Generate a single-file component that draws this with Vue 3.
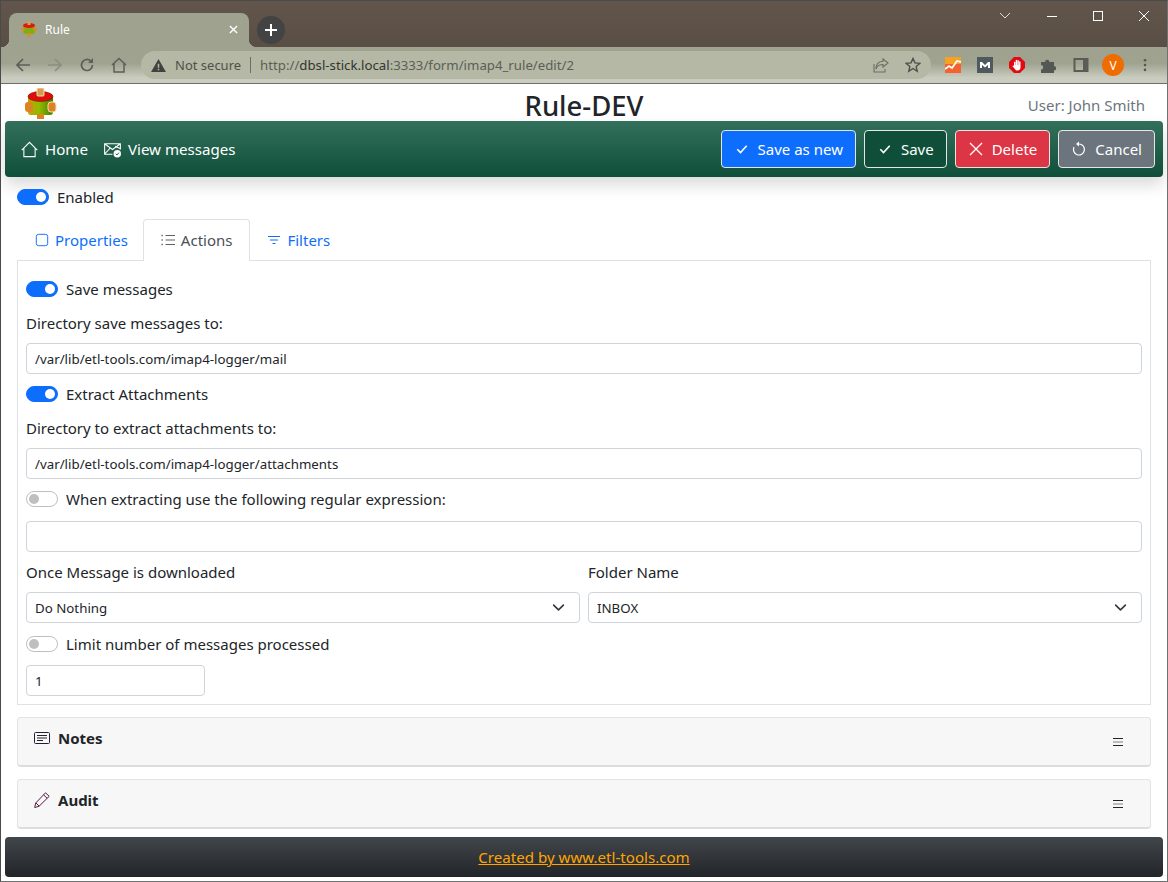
<script setup>
const navLinks = [
  { label: 'Home', icon: 'home' },
  { label: 'View messages', icon: 'mail' }
]
const buttons = [
  { label: 'Save as new', cls: 'primary', icon: 'check' },
  { label: 'Save', cls: 'dark', icon: 'check' },
  { label: 'Delete', cls: 'danger', icon: 'x' },
  { label: 'Cancel', cls: 'muted', icon: 'undo' }
]
const accordions = [
  { label: 'Notes', icon: 'notes' },
  { label: 'Audit', icon: 'pencil' }
]
</script>

<template>
  <div class="window">
    <div class="tabstrip">
      <div class="tab">
        <svg class="favicon" viewBox="0 0 16 16">
          <rect x="2.5" y="4" width="11" height="9" fill="#7fae10" />
          <rect x="0.5" y="6" width="3" height="4" rx="1" fill="#e08a20" />
          <rect x="12.5" y="6" width="3" height="4" rx="1" fill="#e08a20" />
          <rect x="6.5" y="12" width="3" height="4" fill="#e08a20" />
          <ellipse cx="8" cy="4.5" rx="6" ry="2.4" fill="#d81a10" />
          <rect x="6.5" y="0.5" width="3" height="3.5" fill="#d9a050" />
        </svg>
        <span class="tab-title">Rule</span>
        <svg class="tab-close" viewBox="0 0 10 10"><path d="M1 1l8 8M9 1l-8 8" stroke="#fff" stroke-width="1.5" /></svg>
      </div>
      <div class="new-tab">
        <svg viewBox="0 0 12 12" width="12" height="12"><path d="M6 0v12M0 6h12" stroke="#fff" stroke-width="2" /></svg>
      </div>
      <div class="win-controls">
        <svg viewBox="0 0 12 8" width="12" height="8"><path d="M1 1l5 5 5-5" fill="none" stroke="#ddd" stroke-width="1" /></svg>
        <svg viewBox="0 0 10 10" width="10" height="10"><path d="M0 5.5h10" stroke="#fff" stroke-width="1" /></svg>
        <svg viewBox="0 0 10 10" width="10" height="10"><rect x="0.5" y="0.5" width="9" height="9" fill="none" stroke="#fff" /></svg>
        <svg viewBox="0 0 10 10" width="10" height="10"><path d="M0 0l10 10M10 0L0 10" stroke="#fff" stroke-width="1" /></svg>
      </div>
    </div>

    <div class="toolbar">
      <svg class="tool" viewBox="0 0 16 16"><path d="M15 8H2M8 2L2 8l6 6" fill="none" stroke="#5c5f5a" stroke-width="1.7" /></svg>
      <svg class="tool" viewBox="0 0 16 16"><path d="M1 8h13M8 2l6 6-6 6" fill="none" stroke="#8a8e80" stroke-width="1.7" /></svg>
      <svg class="tool" viewBox="0 0 16 16"><path d="M13.5 8a5.5 5.5 0 1 1-1.6-3.9" fill="none" stroke="#5c5f5a" stroke-width="1.7" /><path d="M14 1v5H9z" fill="#5c5f5a" /></svg>
      <svg class="tool" viewBox="0 0 16 16"><path d="M1 8l7-6.5L15 8M3 6.5V15h10V6.5" fill="none" stroke="#5c5f5a" stroke-width="1.5" /></svg>
      <div class="omnibox">
        <svg class="warn" viewBox="0 0 16 14"><path d="M8 0l8 14H0z" fill="#3f423f" /><path d="M7.2 5h1.6v4.5H7.2zM7.2 10.5h1.6V12H7.2z" fill="#b4b8a5" /></svg>
        <span class="secure">Not secure</span>
        <span class="url-sep"></span>
        <span class="url"><span class="url-faint">http://</span>dbsl-stick.local<span class="url-faint">:3333/form/imap4_rule/edit/2</span></span>
        <svg class="omni-ico" viewBox="0 0 16 16"><path d="M10 2l5 4-5 4V7.5C6 7.5 4 9 3 12c0-4.500 2.500-7.500 7-7.800zM1 7v8h11v-3" fill="none" stroke="#6b6e63" stroke-width="1.100" /></svg>
        <svg class="omni-ico" viewBox="0 0 16 16"><path d="M8 1.500l2 4.400 4.800.5-3.600 3.200 1 4.700L8 11.500l-4.200 2.800 1-4.700L1.200 6.400 6 5.900z" fill="none" stroke="#4d504a" stroke-width="1.400" /></svg>
      </div>
      <div class="extensions">
        <svg class="ext" viewBox="0 0 16 16"><rect width="16" height="16" fill="#f5622d" /><path d="M0 0h16v7H0z" fill="#f8a022" /><path d="M0 12l4-3 3 2 5-7 4 1" fill="none" stroke="#fff" stroke-width="1.800" /></svg>
        <svg class="ext" viewBox="0 0 16 16"><rect width="16" height="16" fill="#4f5a5e" /><path d="M3 11V5h2l3 3 3-3h2v6h-2V8L8 10.500 5 8v3z" fill="#fff" /></svg>
        <svg class="ext" viewBox="0 0 16 16">
          <path d="M5 0h6l5 5v6l-5 5H5l-5-5V5z" fill="#e00b12" />
          <path d="M5 5.500a.7.7 0 0 1 1.400 0V8h.3V3.500a.7.7 0 0 1 1.400 0V8h.3V3.800a.7.7 0 0 1 1.400 0V8h.3V5a.7.7 0 0 1 1.400 0v5.500c0 1.800-1.200 3-3 3H8.500c-1.200 0-2-.6-2.600-1.600L3.700 9.500c-.5-.8.600-1.500 1.100-.8L5 9z" fill="#fff" />
        </svg>
        <svg class="ext" viewBox="0 0 16 16"><path d="M0 5h4a2.200 2.200 0 1 1 4.400 0H13v4a2.200 2.200 0 1 1 0 4.400V16H0v-3.500a2.200 2.200 0 1 0 0-4.400z" fill="#555852" /></svg>
        <svg class="ext" viewBox="0 0 16 16"><rect x="1.500" y="2" width="13" height="12" fill="none" stroke="#5a5d55" stroke-width="2" /><rect x="10" y="2" width="4.500" height="12" fill="#5a5d55" /></svg>
        <div class="avatar">V</div>
        <svg class="dots" viewBox="0 0 4 16"><circle cx="2" cy="2.500" r="1.500" fill="#555" /><circle cx="2" cy="8" r="1.500" fill="#555" /><circle cx="2" cy="13.500" r="1.500" fill="#555" /></svg>
      </div>
    </div>

    <div class="page">
      <header class="top">
        <svg class="logo" viewBox="0 0 32 32">
          <defs>
            <linearGradient id="body" x1="0" x2="1" y1="0" y2="0">
              <stop offset="0" stop-color="#c8a000" />
              <stop offset="0.45" stop-color="#8fbc00" />
              <stop offset="1" stop-color="#4a7a00" />
            </linearGradient>
          </defs>
          <rect x="3" y="8" width="25" height="19" rx="3" fill="url(#body)" />
          <rect x="0" y="14" width="8" height="10" rx="3" fill="#dd8422" />
          <rect x="23" y="14" width="8" height="10" rx="3" fill="#dd8422" stroke="#f0e0b0" />
          <rect x="12" y="26" width="7" height="5" fill="#dd8422" />
          <ellipse cx="15.500" cy="8.500" rx="12.500" ry="5" fill="#dc1008" stroke="#600" stroke-width="0.500" />
          <rect x="12" y="0" width="7" height="8" rx="1" fill="#d99a4a" stroke="#f0e0b0" />
        </svg>
        <h1 class="title">Rule-DEV</h1>
        <span class="user">User: John Smith</span>
      </header>

      <nav class="navbar">
        <a v-for="link in navLinks" :key="link.label" class="nav-link">
          <svg v-if="link.icon === 'home'" viewBox="0 0 16 16" width="17" height="17"><path d="M.7 8.500L8 1.200l7.300 7.300M2.700 6.700v8h10.600v-8" fill="none" stroke="#fff" stroke-width="1" /></svg>
          <svg v-else viewBox="0 0 16 16" width="17" height="17"><path d="M8 12.500H.6V2.500h14.800V8M.8 2.800L8 8l7-5.200M.8 12l5-5.200M15 7L10.500 5" fill="none" stroke="#fff" stroke-width="1" /><circle cx="12.500" cy="12" r="3.500" fill="#fff" /><path d="M11 12l1.200 1.200L14 11" fill="none" stroke="#1d5a45" stroke-width="0.900" /></svg>
          {{ link.label }}
        </a>
        <div class="actions">
          <button v-for="b in buttons" :key="b.label" class="btn" :class="b.cls">
            <svg v-if="b.icon === 'check'" viewBox="0 0 16 16" width="16" height="16"><path d="M3.300 8.300l3.200 3.200 6.200-6.700" fill="none" stroke="#fff" stroke-width="1.600" /></svg>
            <svg v-else-if="b.icon === 'x'" viewBox="0 0 16 16" width="16" height="16"><path d="M2 2l12 12M14 2L2 14" stroke="#fff" stroke-width="1.300" /></svg>
            <svg v-else viewBox="0 0 16 16" width="16" height="16"><path d="M8 3a5.500 5.500 0 1 1-5 3" fill="none" stroke="#fff" stroke-width="1.200" /><path d="M8 .5v5L5 3z" fill="#fff" /></svg>
            {{ b.label }}
          </button>
        </div>
      </nav>

      <main class="content">
        <label class="switch-row enabled-row"><span class="switch on"></span>Enabled</label>

        <div class="tabs">
          <a class="page-tab">
            <svg viewBox="0 0 16 16" width="14" height="14"><rect x="1.500" y="1.500" width="13" height="13" rx="2.500" fill="none" stroke="#0d6efd" stroke-width="1.100" /></svg>
            Properties
          </a>
          <a class="page-tab active">
            <svg viewBox="0 0 16 16" width="16" height="16"><path d="M5.500 3.500H15M5.500 8H15M5.500 12.500H15" stroke="#5a6168" stroke-width="1" /><path d="M1.500 3.500h2M1.500 8h2M1.500 12.500h2" stroke="#5a6168" stroke-width="1.300" stroke-dasharray="1.300 .7" /></svg>
            Actions
          </a>
          <a class="page-tab">
            <svg viewBox="0 0 16 16" width="16" height="16"><path d="M2 4.500h12M4 8h8M6.500 11.500h3" stroke="#0d6efd" stroke-width="1" /></svg>
            Filters
          </a>
        </div>

        <section class="panel">
          <label class="switch-row"><span class="switch on"></span>Save messages</label>
          <div class="field-label">Directory save messages to:</div>
          <div class="input">/var/lib/etl-tools.com/imap4-logger/mail</div>
          <label class="switch-row"><span class="switch on"></span>Extract Attachments</label>
          <div class="field-label">Directory to extract attachments to:</div>
          <div class="input">/var/lib/etl-tools.com/imap4-logger/attachments</div>
          <label class="switch-row"><span class="switch"></span>When extracting use the following regular expression:</label>
          <div class="input regex"></div>
          <div class="two-cols">
            <div>
              <div class="field-label">Once Message is downloaded</div>
              <div class="input select">Do Nothing
                <svg viewBox="0 0 16 16" width="13" height="13"><path d="M2 5l6 6 6-6" fill="none" stroke="#343a40" stroke-width="2" stroke-linecap="round" stroke-linejoin="round" /></svg>
              </div>
            </div>
            <div>
              <div class="field-label">Folder Name</div>
              <div class="input select">INBOX
                <svg viewBox="0 0 16 16" width="13" height="13"><path d="M2 5l6 6 6-6" fill="none" stroke="#343a40" stroke-width="2" stroke-linecap="round" stroke-linejoin="round" /></svg>
              </div>
            </div>
          </div>
          <label class="switch-row"><span class="switch"></span>Limit number of messages processed</label>
          <div class="input small">1</div>
        </section>

        <div v-for="a in accordions" :key="a.label" class="accordion">
          <svg v-if="a.icon === 'notes'" class="acc-icon" viewBox="0 0 16 12" width="16" height="12"><rect x="0.500" y="0.500" width="15" height="11" rx="1" fill="none" stroke="#2a1a40" /><path d="M3 3.500h10M3 6h10M3 8.500h6" stroke="#212529" /></svg>
          <svg v-else class="acc-icon pencil" viewBox="0 0 16 16" width="16" height="16"><path d="M11.500 .8l3.700 3.500L5 14.300l-4.300 1.200 1-4.500zM9.500 2.800l3.700 3.500M2 11l3 3" fill="none" stroke="#5a1840" stroke-width="1" /></svg>
          <span class="acc-title">{{ a.label }}</span>
          <svg class="acc-menu" viewBox="0 0 10 8" width="10" height="8"><path d="M0 .5h10M0 7.500h10" stroke="#212529" /><path d="M0 4h10" stroke="#bbb" stroke-width="2" /></svg>
        </div>
      </main>

      <footer class="footer"><a>Created by www.etl-tools.com</a></footer>
    </div>
  </div>
</template>

<style>
html, body { margin: 0; background: #fff; }
</style>

<style scoped>
* { box-sizing: border-box; }
.window {
  width: 1168px;
  height: 882px;
  border: 1px solid #4a4a4a;
  border-right-color: #707070;
  border-bottom-color: #707070;
  display: flex;
  flex-direction: column;
  overflow: hidden;
  font-family: "Noto Sans", "Open Sans", sans-serif;
  color: #212529;
  font-size: 15px;
}
.tabstrip {
  height: 46px;
  background: linear-gradient(#62564c, #594e45);
  display: flex;
  align-items: flex-end;
  padding-left: 8px;
  flex-shrink: 0;
}
.tab {
  width: 240px;
  height: 34px;
  background: #9ea28e;
  border-radius: 8px 8px 0 0;
  display: flex;
  align-items: center;
  padding: 0 8px 2px 12px;
  color: #fff;
  font-size: 12px;
  position: relative;
}
.tab::before,
.tab::after {
  content: "";
  position: absolute;
  bottom: 0;
  width: 8px;
  height: 8px;
}
.tab::before { left: -8px; background: radial-gradient(circle at 0 0, transparent 8px, #9ea28e 8.500px); }
.tab::after { right: -8px; background: radial-gradient(circle at 100% 0, transparent 8px, #9ea28e 8.500px); }
.favicon { width: 16px; height: 16px; margin-right: 8px; }
.tab-title { flex: 1; }
.tab-close { width: 9px; height: 9px; margin-right: 3px; }
.new-tab {
  width: 28px;
  height: 28px;
  border-radius: 50%;
  background: #434343;
  display: flex;
  align-items: center;
  justify-content: center;
  margin: 0 0 3px 8px;
}
.win-controls {
  margin-left: auto;
  align-self: flex-start;
  display: flex;
  align-items: center;
  gap: 36px;
  padding: 10px 18px 0 0;
}
.toolbar {
  height: 37px;
  background: linear-gradient(#9ea28e 0, #9ea28e 45%, #c9ccbe 85%, #c9ccbe 100%);
  border-bottom: 1px solid #70726a;
  display: flex;
  align-items: center;
  padding: 0 15px 0 14px;
  flex-shrink: 0;
}
.tool { width: 16px; height: 16px; margin-right: 16px; }
.omnibox {
  width: 790px;
  height: 28px;
  margin-left: -2px;
  border-radius: 14px;
  background: #b4b8a5;
  display: flex;
  align-items: center;
  padding: 0 10px 0 10px;
  color: #44463f;
}
.warn { width: 15px; height: 13px; margin-right: 9px; }
.secure { font-size: 13px; color: #4f514a; }
.url-sep { width: 1px; height: 16px; background: #6b6e63; margin: 0 9px; }
.url { flex: 1; font-size: 13.230px; color: #33352f; }
.url-faint { color: #5c5e56; }
.omni-ico { width: 16px; height: 16px; margin-left: 16px; }
.extensions {
  display: flex;
  align-items: center;
  margin-left: 6px;
}
.ext { width: 16px; height: 16px; margin: 0 8px; flex-shrink: 0; }
.avatar {
  width: 22px;
  height: 22px;
  margin: 0 5px;
  border-radius: 50%;
  background: #ef6c00;
  color: #fff;
  font-size: 12px;
  display: flex;
  align-items: center;
  justify-content: center;
  flex-shrink: 0;
}
.dots { width: 4px; height: 14px; margin-left: 14px; flex-shrink: 0; }
.page {
  flex: 1;
  display: flex;
  flex-direction: column;
  padding: 0 4px 4px;
  min-height: 0;
}
.top {
  height: 37px;
  display: flex;
  align-items: center;
  position: relative;
  padding: 0 18px 0 20px;
  flex-shrink: 0;
}
.logo { width: 32px; height: 32px; margin-top: 3px; }
.title {
  position: absolute;
  left: 0;
  right: 0;
  top: 3px;
  margin: 0;
  text-align: center;
  font-size: 27.500px;
  line-height: 38px;
  font-weight: 500;
  color: #212529;
}
.user { margin-left: auto; font-size: 15px; color: #6c757d; position: relative; top: 2px; }
.navbar {
  height: 56px;
  background: linear-gradient(#33705c, #0f4f3a);
  border-radius: 4px;
  box-shadow: 0 8px 16px rgba(0, 0, 0, 0.15);
  display: flex;
  align-items: center;
  padding: 0 8px 0 16px;
  flex-shrink: 0;
  position: relative;
}
.nav-link {
  display: flex;
  align-items: center;
  gap: 7px;
  color: #fff;
  font-size: 15.100px;
  margin-right: 16px;
}
.actions { margin-left: auto; display: flex; gap: 8px; }
.btn {
  height: 38px;
  padding: 0 12px;
  border: 1px solid #e6e6e6;
  border-radius: 4px;
  color: #fff;
  font-family: inherit;
  font-size: 15px;
  display: flex;
  align-items: center;
  gap: 8px;
}
.btn.primary { background: #0d6efd; }
.btn.dark { background: #0f4f3a; }
.btn.danger { background: #dc3545; }
.btn.muted { background: #6c757d; }
.content { flex: 1; padding: 0 12px; min-height: 0; }
.switch-row { display: flex; align-items: center; gap: 8px; height: 24px; font-size: 15px; }
.enabled-row { margin-top: 8px; }
.switch {
  width: 32px;
  height: 16px;
  border-radius: 8px;
  border: 1px solid #bfbfbf;
  background: #fff;
  position: relative;
  flex-shrink: 0;
}
.switch::after {
  content: "";
  position: absolute;
  left: 2px;
  top: 2px;
  width: 10px;
  height: 10px;
  border-radius: 50%;
  background: #bfbfbf;
}
.switch.on { background: #0d6efd; border-color: #0d6efd; }
.switch.on::after { left: auto; right: 2px; background: #fff; }
.tabs {
  display: flex;
  height: 42px;
  margin-top: 10px;
  padding-left: 1px;
  position: relative;
  z-index: 1;
}
.page-tab {
  display: flex;
  align-items: center;
  gap: 6px;
  padding: 0 16px 2px;
  color: #0d6efd;
  font-size: 15px;
  border: 1px solid transparent;
  border-bottom: none;
}
.page-tab:first-child { padding-right: 14px; }
.page-tab + .page-tab { gap: 5px; }
.page-tab.active {
  color: #495057;
  background: #fff;
  border-color: #dee2e6;
  border-radius: 4px 4px 0 0;
  padding-right: 17px;
}
.page-tab.active + .page-tab { padding-left: 15px; }
.panel {
  height: 445px;
  margin-top: -1px;
  border: 1px solid #dee2e6;
  padding: 16px 8px 0;
}
.field-label { height: 24px; line-height: 24px; margin-top: 10px; font-size: 15px; }
.input {
  height: 31px;
  margin-top: 8px;
  border: 1px solid #ced4da;
  border-radius: 4px;
  padding: 0 8px;
  font-size: 13.300px;
  line-height: 30px;
  background: #fff;
}
.input.regex { margin-top: 10px; }
.panel > .input + .switch-row { margin-top: 8px; }
.select { display: flex; align-items: center; justify-content: space-between; padding-right: 14px; }
.two-cols { display: grid; grid-template-columns: 1fr 1fr; gap: 8px; margin-top: 8px; }
.two-cols .field-label { margin-top: 0; }
.two-cols + .switch-row { margin-top: 9px; }
.two-cols + .switch-row + .input { margin-top: 9px; }
.small { width: 179px; }
.accordion {
  height: 50px;
  margin-top: 12px;
  background: #f7f7f7;
  border: 1px solid #e3e3e3;
  border-bottom: 2px solid #ddd;
  border-radius: 4px;
  display: flex;
  align-items: flex-start;
  padding: 11px 27px 0 16px;
  gap: 8px;
}
.acc-icon { margin-top: 3px; }
.acc-icon.pencil { margin-top: 1px; }
.acc-title { font-weight: 700; font-size: 15px; line-height: 18px; }
.acc-menu { margin: 9px 0 0 auto; }
.footer {
  height: 40px;
  flex-shrink: 0;
  background: linear-gradient(#42474b, #212428);
  border-radius: 4px;
  display: flex;
  align-items: center;
  justify-content: center;
}
.footer a { color: #ffa500; text-decoration: underline; font-size: 15.100px; }
</style>
